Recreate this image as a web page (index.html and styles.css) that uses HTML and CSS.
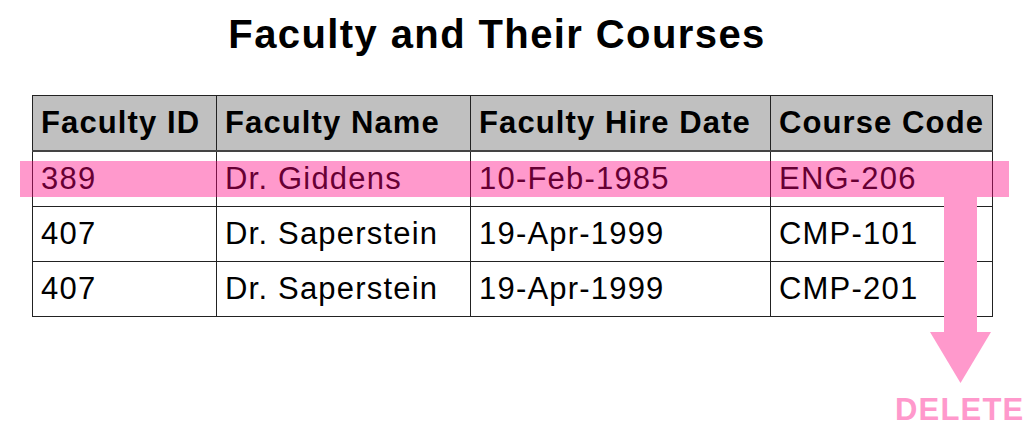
FILE: index.html
```html
<!DOCTYPE html>
<html>
<head>
<meta charset="utf-8">
<link rel="stylesheet" href="styles.css">
</head>
<body>
<div class="page">
  <h1 class="title">Faculty and Their Courses</h1>
  <table class="grid">
    <colgroup>
      <col class="c1"><col class="c2"><col class="c3"><col class="c4">
    </colgroup>
    <thead>
      <tr><th>Faculty ID</th><th>Faculty Name</th><th>Faculty Hire Date</th><th>Course Code</th></tr>
    </thead>
    <tbody>
      <tr><td>389</td><td>Dr. Giddens</td><td>10-Feb-1985</td><td>ENG-206</td></tr>
      <tr><td>407</td><td>Dr. Saperstein</td><td>19-Apr-1999</td><td>CMP-101</td></tr>
      <tr><td>407</td><td>Dr. Saperstein</td><td>19-Apr-1999</td><td>CMP-201</td></tr>
    </tbody>
  </table>
  <div class="highlight"></div>
  <svg class="arrow" width="62" height="187" viewBox="0 0 62 187">
    <rect x="14" y="0" width="33" height="136" fill="#ff99cc"/>
    <polygon points="0,135 61,135 30.5,186" fill="#ff99cc"/>
  </svg>
  <div class="delete-label">DELETE</div>
</div>
</body>
</html>
```
FILE: styles.css
```css
html, body {
  margin: 0;
  padding: 0;
  background: #ffffff;
}
.page {
  position: relative;
  width: 1024px;
  height: 438px;
  overflow: hidden;
  font-family: "Liberation Sans", Arial, sans-serif;
  color: #000;
}
.title {
  margin: 11px 0 0 0;
  padding-right: 30px;
  text-align: center;
  font-size: 40px;
  line-height: 46px;
  font-weight: bold;
  letter-spacing: 1.4px;
}
.grid {
  margin: 38px 0 0 32px;
  border-collapse: collapse;
  table-layout: fixed;
  width: 961px;
}
.c1 { width: 184px; }
.c2 { width: 254px; }
.c3 { width: 300px; }
.c4 { width: 222px; }
.grid th, .grid td {
  border: 1px solid #222;
  padding: 0 0 0 8px;
  height: 54px;
  line-height: 54px;
  font-size: 31px;
  text-align: left;
  vertical-align: middle;
  white-space: nowrap;
  box-sizing: border-box;
}
.grid th {
  background: #c0c0c0;
  font-weight: bold;
  letter-spacing: 1.1px;
  height: 55px;
  border-bottom: 2px solid #444;
}
.grid td {
  font-weight: normal;
  letter-spacing: 1.2px;
}
.highlight {
  position: absolute;
  left: 20px;
  top: 161px;
  width: 989px;
  height: 36px;
  background: rgba(255, 0, 128, 0.4);
}
.arrow {
  position: absolute;
  left: 930px;
  top: 197px;
}
.delete-label {
  position: absolute;
  left: 895px;
  top: 394px;
  font-size: 31px;
  line-height: 31px;
  font-weight: bold;
  letter-spacing: 1.2px;
  color: #ff99cc;
  white-space: nowrap;
}
```
